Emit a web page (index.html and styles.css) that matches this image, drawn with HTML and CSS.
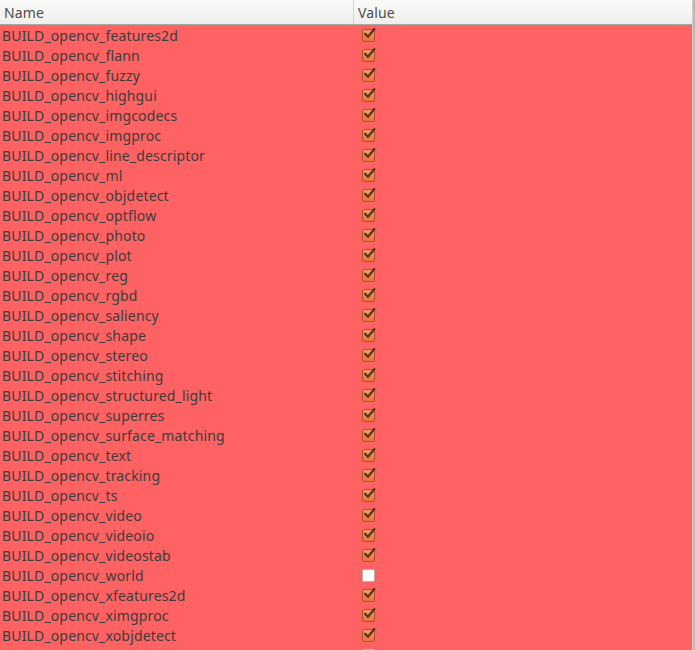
FILE: index.html
```html
<!DOCTYPE html>
<html>
<head>
<meta charset="utf-8">
<link rel="stylesheet" href="styles.css">
</head>
<body>
<div class="view">
  <div class="table">
    <div class="header">
      <div class="hcell name-col">Name</div>
      <div class="hcell value-col">Value</div>
    </div>
    <div class="rows" id="rows"></div>
  </div>
  <div class="edge"></div>
</div>
<script src="app.js"></script>
</body>
</html>
```

FILE: app.js
```js
const items = [
  ["features2d",1],["flann",1],["fuzzy",1],["highgui",1],["imgcodecs",1],["imgproc",1],
  ["line_descriptor",1],["ml",1],["objdetect",1],["optflow",1],["photo",1],["plot",1],
  ["reg",1],["rgbd",1],["saliency",1],["shape",1],["stereo",1],["stitching",1],
  ["structured_light",1],["superres",1],["surface_matching",1],["text",1],["tracking",1],
  ["ts",1],["video",1],["videoio",1],["videostab",1],["world",0],["xfeatures2d",1],
  ["ximgproc",1],["xobjdetect",1],["xphoto",0]
];
const check = '<svg class="tick" viewBox="0 0 14 14" width="14" height="14"><path d="M3 6.8 L6 9.8 L12.4 2" fill="none" stroke="#5a2f1c" stroke-width="2.2" stroke-linecap="round" stroke-linejoin="round"/></svg>';
const rows = document.getElementById("rows");
rows.innerHTML = items.map(([n, c]) =>
  '<div class="row"><div class="cell name-col">BUILD_opencv_' + n + '</div>' +
  '<div class="cell value-col"><span class="box ' + (c ? 'on' : 'off') + '">' + (c ? check : '') + '</span></div></div>'
).join("");
```

FILE: styles.css
```css
html, body {
  margin: 0;
  padding: 0;
  background: #ff6262;
  overflow: hidden;
}
.view {
  display: flex;
  width: 695px;
  height: 650px;
  overflow: hidden;
  font-family: "Noto Sans", "DejaVu Sans", sans-serif;
  font-size: 14px;
  letter-spacing: 0.15px;
  color: #3c3c3c;
}
.table {
  width: 692px;
  display: flex;
  flex-direction: column;
}
.edge {
  width: 3px;
  background: #bdbbb7;
  border-left: 1px solid #cfcdc9;
  box-sizing: border-box;
}
.header {
  display: flex;
  height: 25px;
  box-sizing: border-box;
  background: linear-gradient(#fbfbfa, #efeeec);
  border-bottom: 1px solid #a9a7a3;
  flex: none;
}
.hcell {
  display: flex;
  align-items: center;
  padding-left: 4px;
  padding-top: 1px;
  box-sizing: border-box;
  color: #4c4c4c;
}
.name-col {
  width: 354px;
  flex: none;
}
.header .name-col {
  border-right: 1px solid #d6d4d0;
}
.value-col {
  flex: 1;
}
.hcell.value-col {
  padding-left: 4px;
}
.rows {
  background: #ff6262;
}
.row {
  display: flex;
  height: 20px;
  align-items: center;
}
.cell.name-col {
  padding-left: 2px;
  box-sizing: border-box;
  white-space: nowrap;
}
.cell.value-col {
  padding-left: 8px;
  display: flex;
  align-items: center;
}
.box {
  position: relative;
  width: 13px;
  height: 13px;
  box-sizing: border-box;
  border-radius: 2px;
  display: block;
}
.box.on {
  background: linear-gradient(#f59a62, #e9743c);
  border: 1px solid #a8532c;
}
.box.off {
  background: #ffffff;
  border: 1px solid #b4b0ab;
}
.tick {
  position: absolute;
  left: -1px;
  top: -3px;
}
```
